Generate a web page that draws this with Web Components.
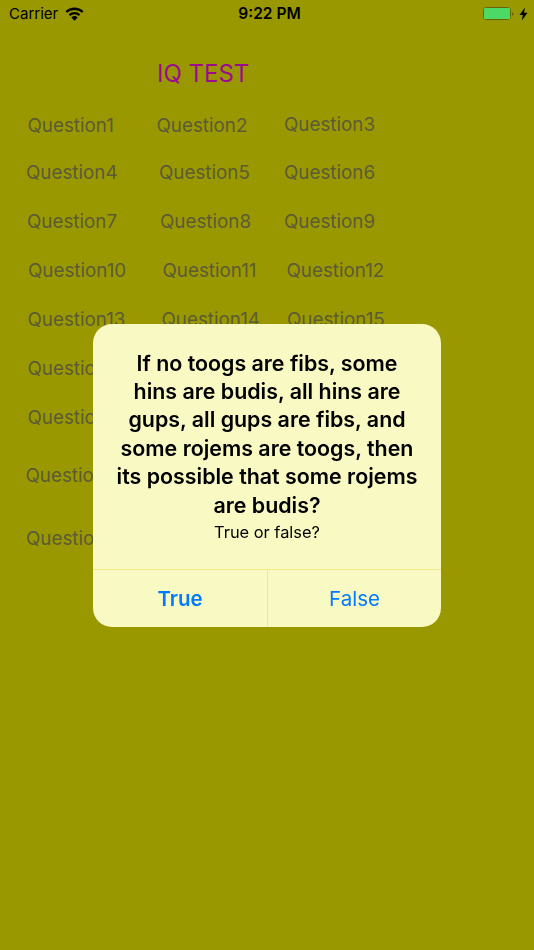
<!DOCTYPE html>
<html>
<head>
<meta charset="utf-8">
<title>IQ Test</title>
<style>
	html, body { margin: 0; padding: 0; height: 100%; }
	body { background: #9a9800; font-family: Inter, "Liberation Sans", sans-serif; overflow: hidden; }
</style>
</head>
<body>

<template id="status-bar-tpl">
	<style>
		:host { display: grid; grid-template-columns: 1fr auto 1fr; align-items: center; height: 27px; font-size: 15px; color: #000; }
		.left { display: flex; align-items: center; gap: 7px; padding-left: 9px; }
		.time { font-weight: 600; font-size: 15.5px; padding-left: 5px; }
		.right { display: flex; align-items: center; justify-content: flex-end; gap: 1px; padding-right: 6px; }
		.battery { width: 26px; height: 11px; border: 1.5px solid #666400; border-radius: 3.5px; }
		.level { width: 100%; height: 100%; background: #4cd964; border-radius: 1px; }
		.nub { margin-right: 4px; }
		svg { display: block; }
	</style>
	<div class="left">
		<span>Carrier</span>
		<svg width="19" height="14" viewBox="0 0 18 13">
			<path d="M9 13 L6 9.7 A4.6 4.6 0 0 1 12 9.7 Z" fill="#000"/>
			<path d="M4.2 7.5 A7.2 7.2 0 0 1 13.8 7.5" fill="none" stroke="#000" stroke-width="2.2"/>
			<path d="M1.2 4.6 A11.4 11.4 0 0 1 16.8 4.6" fill="none" stroke="#000" stroke-width="2.2"/>
		</svg>
	</div>
	<span class="time">9:22 PM</span>
	<div class="right">
		<div class="battery"><div class="level"></div></div>
		<svg class="nub" width="2" height="4" viewBox="0 0 2 4"><path d="M0 0 L2 2 L0 4 Z" fill="#666400"/></svg>
		<svg width="9" height="14" viewBox="0 0 9 13"><path d="M6 0 L0.5 7.4 H3.8 L2.8 13 L8.5 5.2 H5 Z" fill="#000"/></svg>
	</div>
</template>

<template id="app-title-tpl">
	<style>
		:host { display: block; padding: 29px 0 0 157px; height: 40px; font-size: 24px; line-height: 36px; color: #9c0b8e; }
	</style>
	<slot></slot>
</template>

<template id="question-row-tpl">
	<style>
		:host { display: grid; grid-template-columns: 130px 128px 1fr; padding-left: 26px; height: 24px; margin-top: var(--gap, 25px); }
	</style>
	<slot></slot>
</template>

<template id="question-link-tpl">
	<style>
		:host { display: block; font-size: 18.8px; line-height: 24px; color: #5c5b36; white-space: nowrap; }
	</style>
	<slot></slot>
</template>

<template id="alert-dialog-tpl">
	<style>
		:host { position: fixed; inset: 0; display: flex; align-items: center; justify-content: center; }
		.box { width: 348px; height: 303px; display: flex; flex-direction: column; background: #f9f9c4; border-radius: 19px; overflow: hidden; }
		.body { flex: 1; padding: 25px 22px 0; text-align: center; color: #000; }
		.title { font-size: 21.4px; line-height: 28.4px; font-weight: 600; }
		.message { font-size: 16.4px; line-height: 27px; }
		.actions { display: grid; grid-template-columns: 175px 1fr; height: 57px; border-top: 1px solid #ecec84; }
		::slotted(alert-action[preferred]) { border-right: 1px solid #ecec84; }
	</style>
	<div class="box">
		<div class="body">
			<div class="title"><slot name="title"></slot></div>
			<div class="message"><slot name="message"></slot></div>
		</div>
		<div class="actions"><slot name="actions"></slot></div>
	</div>
</template>

<template id="alert-action-tpl">
	<style>
		:host { display: flex; align-items: center; justify-content: center; font-size: 20.5px; color: #007aff; }
		:host([preferred]) { font-weight: 600; }
	</style>
	<slot></slot>
</template>

<status-bar></status-bar>
<app-title>IQ TEST</app-title>

<question-row style="--gap:18px">
	<question-link style="margin-left:1.5px">Question1</question-link>
	<question-link style="margin-left:0.5px">Question2</question-link>
	<question-link style="margin-top:-1px">Question3</question-link>
</question-row>
<question-row style="--gap:23px">
	<question-link>Question4</question-link>
	<question-link style="margin-left:3px">Question5</question-link>
	<question-link>Question6</question-link>
</question-row>
<question-row>
	<question-link style="margin-left:1px">Question7</question-link>
	<question-link style="margin-left:4px">Question8</question-link>
	<question-link>Question9</question-link>
</question-row>
<question-row>
	<question-link style="margin-left:2px">Question10</question-link>
	<question-link style="margin-left:6.5px">Question11</question-link>
	<question-link style="margin-left:2.5px">Question12</question-link>
</question-row>
<question-row>
	<question-link style="margin-left:1.5px">Question13</question-link>
	<question-link style="margin-left:5.5px">Question14</question-link>
	<question-link style="margin-left:3px">Question15</question-link>
</question-row>
<question-row>
	<question-link style="margin-left:1.5px">Question16</question-link>
</question-row>
<question-row>
	<question-link style="margin-left:1.5px">Question17</question-link>
</question-row>
<question-row style="--gap:34px">
	<question-link style="margin-left:-0.5px">Question18</question-link>
</question-row>
<question-row style="--gap:39px">
	<question-link>Question19</question-link>
</question-row>

<alert-dialog>
	<span slot="title">If no toogs are fibs, some hins are budis, all hins are gups, all gups are fibs, and some rojems are toogs, then its possible that some rojems are budis?</span>
	<span slot="message">True or false?</span>
	<alert-action slot="actions" preferred>True</alert-action>
	<alert-action slot="actions">False</alert-action>
</alert-dialog>

<script>
	// every element just stamps its own template into an open shadow root
	['status-bar', 'app-title', 'question-row', 'question-link', 'alert-dialog', 'alert-action'].forEach(function(tag) {
		var template = document.getElementById(tag + '-tpl');
		customElements.define(tag, class extends HTMLElement {
			constructor() {
				super();
				this.attachShadow({mode: 'open'}).appendChild(template.content.cloneNode(true));
			}
		});
	});
</script>
</body>
</html>
